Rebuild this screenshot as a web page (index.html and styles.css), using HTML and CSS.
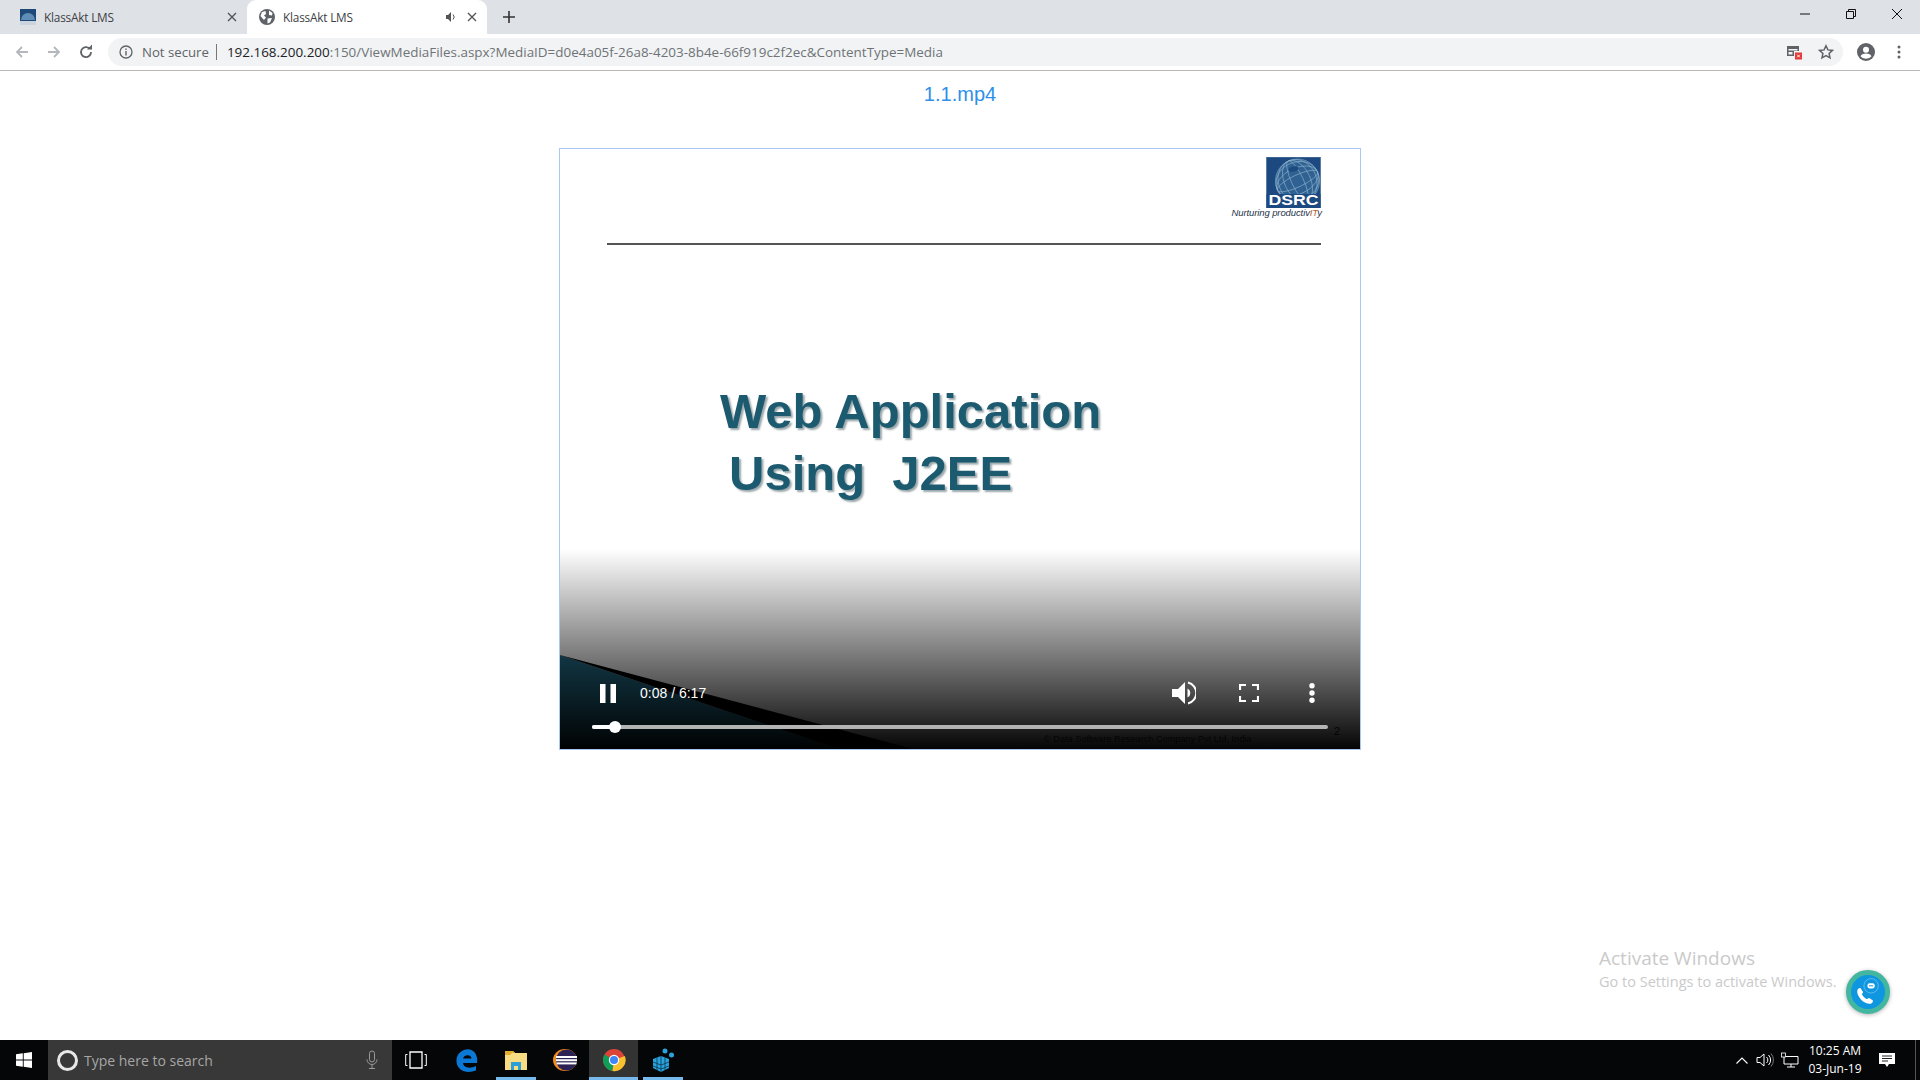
FILE: index.html
```html
<!DOCTYPE html>
<html>
<head>
	<meta charset="utf-8">
	<title>KlassAkt LMS</title>
	<link rel="stylesheet" href="styles.css">
</head>
<body>
<div class="tabstrip">
	<div class="tab">
		<svg class="favicon" viewBox="0 0 16 16"><rect width="16" height="16" fill="#1d4a78"/><path d="M1 11a7 7 0 0 1 14 0z" fill="#5f8db5"/><rect y="12" width="16" height="4" fill="#c9d4de"/></svg>
		<span class="tab-title">KlassAkt LMS</span>
		<svg class="tab-close" viewBox="0 0 10 10"><path d="M1 1l8 8M9 1l-8 8" stroke="#555" stroke-width="1.4"/></svg>
	</div>
	<div class="tab tab-active">
		<svg class="favicon" viewBox="0 0 16 16"><circle cx="8" cy="8" r="8" fill="#5f6368"/><path d="M3 3l3.500-1 .5 3-2 1.500 2 2-2 2.500-1-1-2.500-3zM10 1.500l3.500 2.500-.5 2.500-3-.5zM8.500 9.500l4.500-.5-2 4.500-2.500 1z" fill="#fff"/></svg>
		<span class="tab-title">KlassAkt LMS</span>
		<svg class="tab-audio" viewBox="0 0 12 12"><path d="M1 4h2l3-3v10L3 8H1z" fill="#555"/><path d="M8 3.500a3.500 3.500 0 0 1 0 5" fill="none" stroke="#555"/></svg>
		<svg class="tab-close" viewBox="0 0 10 10"><path d="M1 1l8 8M9 1l-8 8" stroke="#555" stroke-width="1.4"/></svg>
	</div>
	<svg class="new-tab" viewBox="0 0 12 12"><path d="M6 0v12M0 6h12" stroke="#333" stroke-width="1.6"/></svg>
	<div class="win-btns">
		<svg viewBox="0 0 12 12"><path d="M1 6h10" stroke="#111"/></svg>
		<svg viewBox="0 0 12 12"><path d="M1.500 3.500h7v7h-7zM3.500 3.500v-2h7v7h-2" fill="none" stroke="#111"/></svg>
		<svg viewBox="0 0 12 12"><path d="M1 1l10 10M11 1L1 11" stroke="#111"/></svg>
	</div>
</div>

<div class="toolbar">
	<svg class="nav-icon" viewBox="0 0 16 16"><path d="M14 8H3M8 3L3 8l5 5" fill="none" stroke="#b4b7bb" stroke-width="1.8"/></svg>
	<svg class="nav-icon" viewBox="0 0 16 16"><path d="M2 8h11M8 3l5 5-5 5" fill="none" stroke="#b4b7bb" stroke-width="1.8"/></svg>
	<svg class="nav-icon" viewBox="0 0 16 16"><path d="M13 8a5 5 0 1 1-1.500-3.500" fill="none" stroke="#5f6368" stroke-width="1.8"/><path d="M9 5.500h5v-5z" fill="#5f6368"/></svg>
	<div class="omnibox">
		<svg class="info-icon" viewBox="0 0 14 14"><circle cx="7" cy="7" r="6" fill="none" stroke="#5f6368" stroke-width="1.3"/><path d="M7 6v4.500M7 3.500v1.400" stroke="#5f6368" stroke-width="1.4"/></svg>
		<span class="not-secure">Not secure</span>
		<span class="omni-sep"></span>
		<span class="url"><b>192.168.200.200</b>:150/ViewMediaFiles.aspx?MediaID=d0e4a05f-26a8-4203-8b4e-66f919c2f2ec&amp;ContentType=Media</span>
		<svg class="omni-icon" viewBox="0 0 16 16"><path d="M1 2h12v5H8v5H1z" fill="#5f6368"/><rect x="2.500" y="5" width="9" height="1.500" fill="#f1f3f4"/><rect x="2.500" y="8" width="4" height="2.500" fill="#f1f3f4"/><rect x="9" y="8.500" width="7" height="7" fill="#e53935"/><path d="M11.200 10.700l2.600 2.600M13.800 10.700l-2.600 2.600" stroke="#fff"/></svg>
		<svg class="omni-icon star" viewBox="0 0 16 16"><path d="M8 1.800l1.900 4.100 4.500.5-3.300 3 .9 4.500L8 11.600l-4 2.300.9-4.500-3.300-3 4.500-.5z" fill="none" stroke="#5f6368" stroke-width="1.5"/></svg>
	</div>
	<svg class="avatar" viewBox="0 0 18 18"><circle cx="9" cy="9" r="9" fill="#5f6368"/><circle cx="9" cy="6.800" r="3" fill="#fff"/><path d="M3.500 13.200c1.400-2 3.400-2.600 5.500-2.600s4.100.6 5.500 2.600a7 7 0 0 1-11 0z" fill="#fff"/></svg>
	<svg class="kebab" viewBox="0 0 4 14"><circle cx="2" cy="2" r="1.500" fill="#5f6368"/><circle cx="2" cy="7" r="1.500" fill="#5f6368"/><circle cx="2" cy="12" r="1.500" fill="#5f6368"/></svg>
</div>

<div class="page">
	<h1 class="media-title">1.1.mp4</h1>
	<div class="video">
		<div class="slide">
			<div class="logo">
				<svg class="logo-mark" viewBox="0 0 54 51">
					<rect width="54" height="51" fill="#1c4a80" stroke="#5d7fa3"/>
					<circle cx="31" cy="24" r="22" fill="#2f6292"/>
					<g fill="none" stroke="#8fb2ce" stroke-width=".6">
						<circle cx="31" cy="24" r="22"/>
						<ellipse cx="31" cy="24" rx="22" ry="6" transform="rotate(-25 31 24)"/>
						<ellipse cx="31" cy="24" rx="22" ry="13" transform="rotate(-25 31 24)"/>
						<ellipse cx="31" cy="24" rx="22" ry="19" transform="rotate(-25 31 24)"/>
						<ellipse cx="31" cy="24" rx="6" ry="22" transform="rotate(-25 31 24)"/>
						<ellipse cx="31" cy="24" rx="13" ry="22" transform="rotate(-25 31 24)"/>
						<ellipse cx="31" cy="24" rx="19" ry="22" transform="rotate(-25 31 24)"/>
					</g>
					<ellipse cx="27" cy="12" rx="5" ry="2.500" fill="#1c4a80" transform="rotate(-15 27 12)"/>
					<rect y="37" width="54" height="14" fill="#1c4a80"/>
					<text class="logo-word" x="27" y="48" text-anchor="middle" textLength="50" lengthAdjust="spacingAndGlyphs">DSRC</text>
				</svg>
				<span class="logo-tag">Nurturing productiv<i>IT</i>y</span>
			</div>
			<div class="slide-rule"></div>
			<div class="slide-heading">
				<div>Web Application</div>
				<div class="slide-line2">Using&nbsp; J2EE</div>
			</div>
			<svg class="slide-corner" viewBox="0 0 800 100" preserveAspectRatio="none">
				<path d="M0 6L273 98 290 100H0z" fill="#24708c"/>
				<path d="M0 6L353 100H290L273 98z" fill="#000"/>
			</svg>
			<span class="slide-foot">© Data Software Research Company Pvt Ltd, India</span>
			<span class="slide-num">2</span>
		</div>
		<div class="controls">
			<div class="controls-row">
				<svg class="pause" viewBox="0 0 16 19"><path d="M0 0h5.500v19H0zM10.500 0H16v19h-5.500z" fill="#fff"/></svg>
				<span class="time">0:08 / 6:17</span>
				<svg class="ctl-volume" viewBox="0 0 24 24"><path d="M0 8h6l7-7v22l-7-7H0z" fill="#fff"/><path d="M15.500 7.500a5 5 0 0 1 0 9z" fill="#fff"/><path d="M16 1.500a10.800 10.800 0 0 1 0 21" fill="none" stroke="#fff" stroke-width="2"/></svg>
				<svg class="ctl-full" viewBox="0 0 20 18"><path d="M1 6V1h6M13 1h6v5M19 12v5h-6M7 17H1v-5" fill="none" stroke="#fff" stroke-width="2.200"/></svg>
				<svg class="ctl-more" viewBox="0 0 6 20"><circle cx="3" cy="2.800" r="2.700" fill="#fff"/><circle cx="3" cy="10" r="2.700" fill="#fff"/><circle cx="3" cy="17.200" r="2.700" fill="#fff"/></svg>
			</div>
			<div class="seek"><div class="seek-done"></div><div class="seek-thumb"></div></div>
		</div>
	</div>
	<div class="activate">
		<div class="activate-head">Activate Windows</div>
		<div class="activate-sub">Go to Settings to activate Windows.</div>
	</div>
	<div class="call-btn">
		<svg viewBox="0 0 33 33">
			<g transform="translate(-1.500,4.500) scale(.85)">
				<path d="M9 12c1-2 3-3 4-2l2.500 4c.3.800-1 2-1.500 2.500 1 2.500 3.500 5 6 6 .6-.5 1.600-1.800 2.500-1.500l4 2.500c1 1-.2 3-2 4-7 1.500-17-8.500-15.500-15.500z" fill="#fff"/>
			</g>
			<circle cx="19.500" cy="10.500" r="7" fill="none" stroke="#7cc4ee" stroke-width=".7"/>
			<rect x="16" y="8" width="7" height="5" rx="2" fill="#fff"/>
			<rect x="17.500" y="10" width="4" height="1" fill="#0f96e0"/>
		</svg>
	</div>
</div>

<div class="taskbar">
	<div class="task-item start">
		<svg viewBox="0 0 16 16"><path d="M0 2.300l6.800-1v6.300H0zM7.700 1.200L16 0v7.600H7.700zM0 8.400h6.800v6.300L0 13.700zM7.700 8.400H16V16l-8.300-1.200z" fill="#fff"/></svg>
	</div>
	<div class="search">
		<span class="cortana"></span>
		<span class="search-text">Type here to search</span>
		<svg class="mic" viewBox="0 0 12 20"><rect x="3.500" y="1" width="5" height="11" rx="2.500" fill="none" stroke="#9a9a9a"/><path d="M1 9.500a5 5 0 0 0 10 0M6 14.500V18M3 18.500h6" fill="none" stroke="#9a9a9a"/></svg>
	</div>
	<div class="task-item task-view-item">
		<svg class="task-view" viewBox="0 0 22 18"><path d="M5 1h12v16H5z" fill="none" stroke="#fff" stroke-width="1.300"/><path d="M2.500 3.500H.7v11h1.800M19.500 3.500h1.800v11h-1.800" fill="none" stroke="#fff"/></svg>
	</div>
	<div class="task-item">
		<svg viewBox="0 0 24 24"><path d="M22 15h-14c.3 4 6 6.500 13 3v4.500c-9 3.500-19 .5-19.500-9C1 5 9 .5 14.500 1.500 20 2.500 23 8 22 15zM8 10.500h8.500c0-4.500-7.500-4.500-8.500 0z" fill="#0a78d4"/></svg>
	</div>
	<div class="task-item task-open">
		<svg viewBox="0 0 24 24"><path d="M1 3h8l2 2h12v17H1z" fill="#f7dc84"/><path d="M1 3h8l2 2h-3l-2 2H1z" fill="#e5ac2f"/><rect x="7" y="14" width="10" height="8" fill="#2b9fd8"/><rect x="10" y="18" width="4" height="4" fill="#f7dc84"/></svg>
	</div>
	<div class="task-item">
		<svg viewBox="0 0 24 24"><ellipse cx="12" cy="12" rx="12" ry="11" fill="#f18a1d"/><ellipse cx="13.500" cy="12" rx="10.500" ry="10.500" fill="#2c2255"/><rect x="3" y="8" width="21" height="2" fill="#fff"/><rect x="3" y="11.200" width="21" height="2" fill="#fff"/><rect x="3.500" y="14.400" width="20" height="2" fill="#fff"/></svg>
	</div>
	<div class="task-item task-open task-active">
		<svg viewBox="0 0 24 24"><circle cx="12" cy="12" r="11" fill="#db4437"/><path d="M12 12L2.500 6.500A11 11 0 0 0 10.500 22.900z" fill="#0f9d58"/><path d="M12 12L10.500 22.900A11 11 0 0 0 22.800 8z" fill="#fbc02d"/><circle cx="12" cy="12" r="5.200" fill="#fff"/><circle cx="12" cy="12" r="4" fill="#4285f4"/></svg>
	</div>
	<div class="task-item task-open">
		<svg viewBox="0 0 24 24"><g fill="#2aa3dc"><path d="M2 11l8-3 8 3v9l-8 4-8-4z"/><circle cx="14" cy="3" r="2.500"/><circle cx="20.500" cy="7" r="2.500"/></g><path d="M6 9.500v12.500M10 8v16M14 9.500V22M2 14l8 3 8-3M2 18l8 3 8-3" fill="none" stroke="#0b3550" stroke-width=".8"/></svg>
	</div>
	<div class="tray">
		<svg class="tray-caret" viewBox="0 0 12 7"><path d="M.5 6.500L6 1l5.500 5.500" fill="none" stroke="#fff" stroke-width="1.100"/></svg>
		<svg class="tray-sound" viewBox="0 0 18 16"><path d="M1 5.500h3L8 2v12l-4-3.500H1z" fill="none" stroke="#fff"/><path d="M10.500 5a4 4 0 0 1 0 6M12.500 3a7 7 0 0 1 0 10" fill="none" stroke="#fff"/><path d="M15 1.500a10 10 0 0 1 0 13" fill="none" stroke="#777"/></svg>
		<svg class="tray-net" viewBox="0 0 18 16"><path d="M3 4.500h14V12H3zM10 12v3M6 15h8" fill="none" stroke="#fff"/><rect x=".5" y="1" width="4" height="4" fill="#0a0a0c" stroke="#fff" stroke-width=".8"/></svg>
		<div class="clock"><div>10:25 AM</div><div>03-Jun-19</div></div>
		<svg class="tray-note" viewBox="0 0 16 16"><path d="M0 1h16v11H10l-2 3-2-3H0z" fill="#fff"/><path d="M3 4h10M3 6.500h10M3 9h6" stroke="#0a0a0c" stroke-width=".9"/></svg>
		<span class="show-desktop"></span>
	</div>
</div>
</body>
</html>
```

FILE: styles.css
```css
*{
	box-sizing: border-box;
}
html,body{
	margin: 0;
	height: 100%;
}
body{
	display: flex;
	flex-direction: column;
	width: 1920px;
	height: 1080px;
	overflow: hidden;
	background: #fff;
	font-family: "Open Sans","Liberation Sans",sans-serif;
}
svg{
	display: block;
	flex: none;
}

/* tab strip */
.tabstrip{
	display: flex;
	align-items: stretch;
	height: 34px;
	background: #dee1e6;
}
.tab{
	display: flex;
	align-items: center;
	width: 247px;
	padding: 0 10px 0 20px;
	color: #3c4043;
}
.tab-active{
	width: 240px;
	padding: 0 10px 0 12px;
	background: #fff;
	border-radius: 9px 9px 0 0;
}
.favicon{
	width: 16px;
	height: 16px;
}
.tab-title{
	margin-left: 8px;
	flex: 1;
	font-size: 11.800px;
	letter-spacing: -.2px;
	margin-top: -1px;
}
.tab-audio{
	width: 12px;
	height: 12px;
	margin-right: 10px;
}
.tab-close{
	width: 10px;
	height: 10px;
}
.new-tab{
	width: 12px;
	height: 12px;
	margin: 11px 0 0 16px;
}
.win-btns{
	display: flex;
	margin-left: auto;
	gap: 34px;
	padding: 8px 17px 0 0;
}
.win-btns svg{
	width: 12px;
	height: 12px;
}

/* toolbar */
.toolbar{
	display: flex;
	align-items: center;
	height: 37px;
	padding: 0 19px 0 14px;
	background: #fff;
	border-bottom: 1px solid #b9b9b9;
}
.nav-icon{
	width: 16px;
	height: 16px;
	margin-right: 16px;
}
.omnibox{
	display: flex;
	align-items: center;
	width: 1736px;
	height: 28px;
	margin-left: -2px;
	padding: 0 9px 0 11px;
	background: #f1f3f4;
	border-radius: 14px;
	font-size: 13.450px;
	color: #6f7377;
}
.info-icon{
	width: 14px;
	height: 14px;
}
.not-secure{
	margin-left: 9px;
	font-size: 13.200px;
	color: #5f6368;
}
.omni-sep{
	width: 1px;
	height: 16px;
	margin: 0 10px 0 7px;
	background: #777;
}
.url{
	flex: 1;
	white-space: nowrap;
}
.url b{
	font-weight: 400;
	color: #202124;
}
.omni-icon{
	width: 16px;
	height: 16px;
}
.star{
	margin-left: 16px;
}
.avatar{
	width: 18px;
	height: 18px;
	margin-left: 14px;
}
.kebab{
	width: 4px;
	height: 14px;
	margin-left: 22px;
}

/* page */
.page{
	position: relative;
	flex: 1;
	display: flex;
	flex-direction: column;
	align-items: center;
}
.media-title{
	margin: 11px 0 0;
	font: 400 20px "Liberation Sans",sans-serif;
	line-height: 24px;
	color: #2f8fea;
}
.video{
	position: relative;
	width: 802px;
	height: 602px;
	margin-top: 42px;
	border: 1px solid #a9c6f5;
	overflow: hidden;
}
.slide{
	position: absolute;
	inset: 0;
	background: #fff;
}
.logo{
	position: absolute;
	top: 8px;
	right: 38px;
	display: flex;
	flex-direction: column;
	align-items: flex-end;
}
.logo-mark{
	width: 55px;
	height: 51px;
	margin-right: 1px;
}
.logo-word{
	font: 700 14px "Liberation Sans",sans-serif;
	fill: #fff;
}
.logo-tag{
	margin-top: -1px;
	font: italic 9.500px "Liberation Sans",sans-serif;
	letter-spacing: -.1px;
	color: #24344a;
}
.logo-tag i{
	color: #b5602c;
}
.slide-rule{
	position: absolute;
	top: 94px;
	left: 47px;
	width: 714px;
	height: 2px;
	background: #555;
}
.slide-heading{
	position: absolute;
	top: 231px;
	left: 160px;
	font: 700 49px/62px "Liberation Sans",sans-serif;
	color: #1c5a70;
	text-shadow: 2px 2px 2px #9aa6aa;
}
.slide-line2{
	margin-left: 9px;
}
.slide-corner{
	position: absolute;
	left: 0;
	bottom: 0;
	width: 800px;
	height: 100px;
}
.slide-foot{
	position: absolute;
	left: 484px;
	bottom: 5px;
	font: 9.200px "Liberation Sans",sans-serif;
	color: #333;
}
.slide-num{
	position: absolute;
	right: 20px;
	bottom: 12px;
	font: 11px "Liberation Sans",sans-serif;
	color: #111;
}
.controls{
	position: absolute;
	left: 0;
	right: 0;
	bottom: 0;
	height: 200px;
	display: flex;
	flex-direction: column;
	justify-content: flex-end;
	padding: 0 32px 20px 32px;
	background: linear-gradient(to bottom,rgba(0,0,0,0),rgba(0,0,0,.98));
}
.controls-row{
	display: flex;
	align-items: center;
	height: 24px;
	margin-bottom: 20px;
	color: #fff;
}
.pause{
	width: 16px;
	height: 19px;
	margin-left: 8px;
}
.time{
	margin-left: 24px;
	font: 14px "Liberation Sans",sans-serif;
}
.ctl-volume{
	width: 24px;
	height: 24px;
	margin-left: auto;
}
.ctl-full{
	width: 20px;
	height: 18px;
	margin-left: 43px;
}
.ctl-more{
	width: 6px;
	height: 20px;
	margin: 0 13px 0 50px;
}
.seek{
	position: relative;
	height: 4px;
	background: #b3b3b3;
	border-radius: 2px;
}
.seek-done{
	width: 23px;
	height: 4px;
	background: #fff;
	border-radius: 2px;
}
.seek-thumb{
	position: absolute;
	top: -4px;
	left: 17px;
	width: 12px;
	height: 12px;
	background: #fff;
	border-radius: 50%;
}

/* watermark and call button lie over the page */
.activate{
	position: absolute;
	left: 1599px;
	top: 874px;
	color: #cacaca;
}
.activate-head{
	font-size: 19px;
	line-height: 27px;
}
.activate-sub{
	font-size: 14.500px;
	line-height: 19px;
}
.call-btn{
	position: absolute;
	left: 1846px;
	top: 899px;
	width: 44px;
	height: 44px;
	background: #0f96e0;
	border: 5.500px solid #43b6a0;
	border-radius: 50%;
	box-shadow: 0 1px 4px rgba(0,0,0,.3);
}
.call-btn svg{
	width: 100%;
	height: 100%;
}

/* taskbar */
.taskbar{
	display: flex;
	align-items: stretch;
	height: 40px;
	background: #050608;
	color: #fff;
}
.task-item{
	display: flex;
	align-items: center;
	justify-content: center;
	width: 49px;
}
.task-item svg{
	width: 24px;
	height: 24px;
}
.start{
	width: 48px;
}
.start svg{
	width: 16px;
	height: 16px;
}
.task-view-item{
	width: 50px;
	padding-right: 2px;
}
.task-item .task-view{
	width: 22px;
	height: 18px;
}
.task-open{
	background: linear-gradient(#76b9ed,#76b9ed) center bottom/40px 3px no-repeat;
}
.task-active{
	background: linear-gradient(#76b9ed,#76b9ed) center bottom/100% 3px no-repeat #333;
}
.search{
	display: flex;
	align-items: center;
	width: 344px;
	padding: 0 14px 0 9px;
	background: #383838;
	color: #a6a6a6;
	font-size: 14px;
}
.cortana{
	width: 21px;
	height: 21px;
	border: 3px solid #e8e8e8;
	border-radius: 50%;
}
.search-text{
	flex: 1;
	margin-left: 6px;
}
.mic{
	width: 12px;
	height: 20px;
}
.tray{
	display: flex;
	align-items: center;
	margin-left: auto;
}
.tray-caret{
	width: 12px;
	height: 7px;
}
.tray-sound{
	width: 18px;
	height: 16px;
	margin-left: 8px;
}
.tray-net{
	width: 18px;
	height: 16px;
	margin-left: 7px;
}
.clock{
	width: 70px;
	margin-left: 1px;
	text-align: center;
	font-size: 12px;
	line-height: 18px;
}
.tray-note{
	width: 16px;
	height: 16px;
	margin-left: 9px;
}
.show-desktop{
	width: 1px;
	height: 40px;
	margin-left: 20px;
	margin-right: 4px;
	background: #555;
}
```
